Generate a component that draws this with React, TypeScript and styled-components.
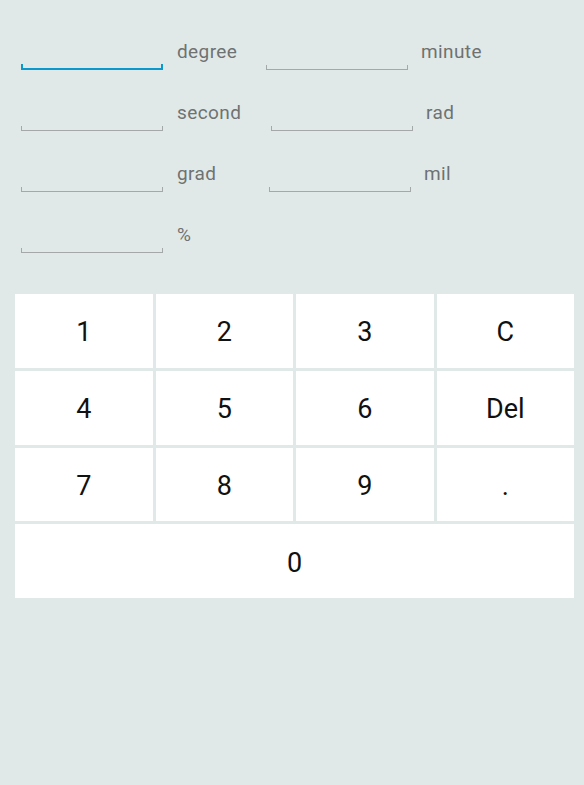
import React from "react";
import styled, { createGlobalStyle } from "styled-components";

const Global = createGlobalStyle`
  html, body { margin: 0; padding: 0; background: #e1e9e8; }
  body { font-family: Roboto, "Noto Sans", sans-serif; }
`;

const Page = styled.div`
  width: 584px;
  min-height: 785px;
  background: #e1e9e8;
  padding-top: 9px;
  box-sizing: border-box;
`;

const Form = styled.div`
  display: flex;
  flex-direction: column;
`;

const Row = styled.div`
  display: flex;
  align-items: flex-end;
  height: 61px;
  padding-left: 21px;
`;

const Field = styled.div<{ $active?: boolean }>`
  width: 142px;
  box-sizing: border-box;
  height: ${(p) => (p.$active ? 6 : 5)}px;
  border: 0 solid ${(p) => (p.$active ? "#0a99cc" : "#a4a8a8")};
  border-width: 0 ${(p) => (p.$active ? 2 : 1)}px ${(p) => (p.$active ? 2 : 1)}px;
`;

const Label = styled.span<{ $w?: number; $gap?: number }>`
  margin-left: ${(p) => p.$gap ?? 14}px;
  width: ${(p) => (p.$w ? `${p.$w}px` : "auto")};
  font-size: 19px;
  letter-spacing: 0.4px;
  line-height: 22px;
  margin-bottom: 7px;
  color: #6e7272;
`;

const Keypad = styled.div`
  margin: 41px 10px 0 15px;
  height: 304px;
  display: grid;
  grid-template-columns: repeat(4, 1fr);
  grid-template-rows: repeat(4, 1fr);
  gap: 3px;
`;

const Key = styled.button<{ $wide?: boolean }>`
  grid-column: ${(p) => (p.$wide ? "1 / -1" : "auto")};
  background: #ffffff;
  border: none;
  padding: 3px 0 0;
  margin: 0;
  font-family: Roboto, "Noto Sans", sans-serif;
  font-size: 27px;
  color: #111111;
  display: flex;
  align-items: center;
  justify-content: center;
`;

const rows: { left: string; right?: string; w?: number; active?: boolean }[] = [
  { left: "degree", right: "minute", w: 89, active: true },
  { left: "second", right: "rad", w: 94 },
  { left: "grad", right: "mil", w: 92 },
  { left: "%" },
];

const keys = ["1", "2", "3", "C", "4", "5", "6", "Del", "7", "8", "9", "."];

export default function App() {
  return (
    <Page>
      <Global />
      <Form>
        {rows.map((r) => (
          <Row key={r.left}>
            <Field $active={r.active} />
            <Label $w={r.right ? r.w : undefined}>{r.left}</Label>
            {r.right && (
              <>
                <Field />
                <Label $gap={13}>{r.right}</Label>
              </>
            )}
          </Row>
        ))}
      </Form>
      <Keypad>
        {keys.map((k) => (
          <Key key={k}>{k}</Key>
        ))}
        <Key $wide>0</Key>
      </Keypad>
    </Page>
  );
}
